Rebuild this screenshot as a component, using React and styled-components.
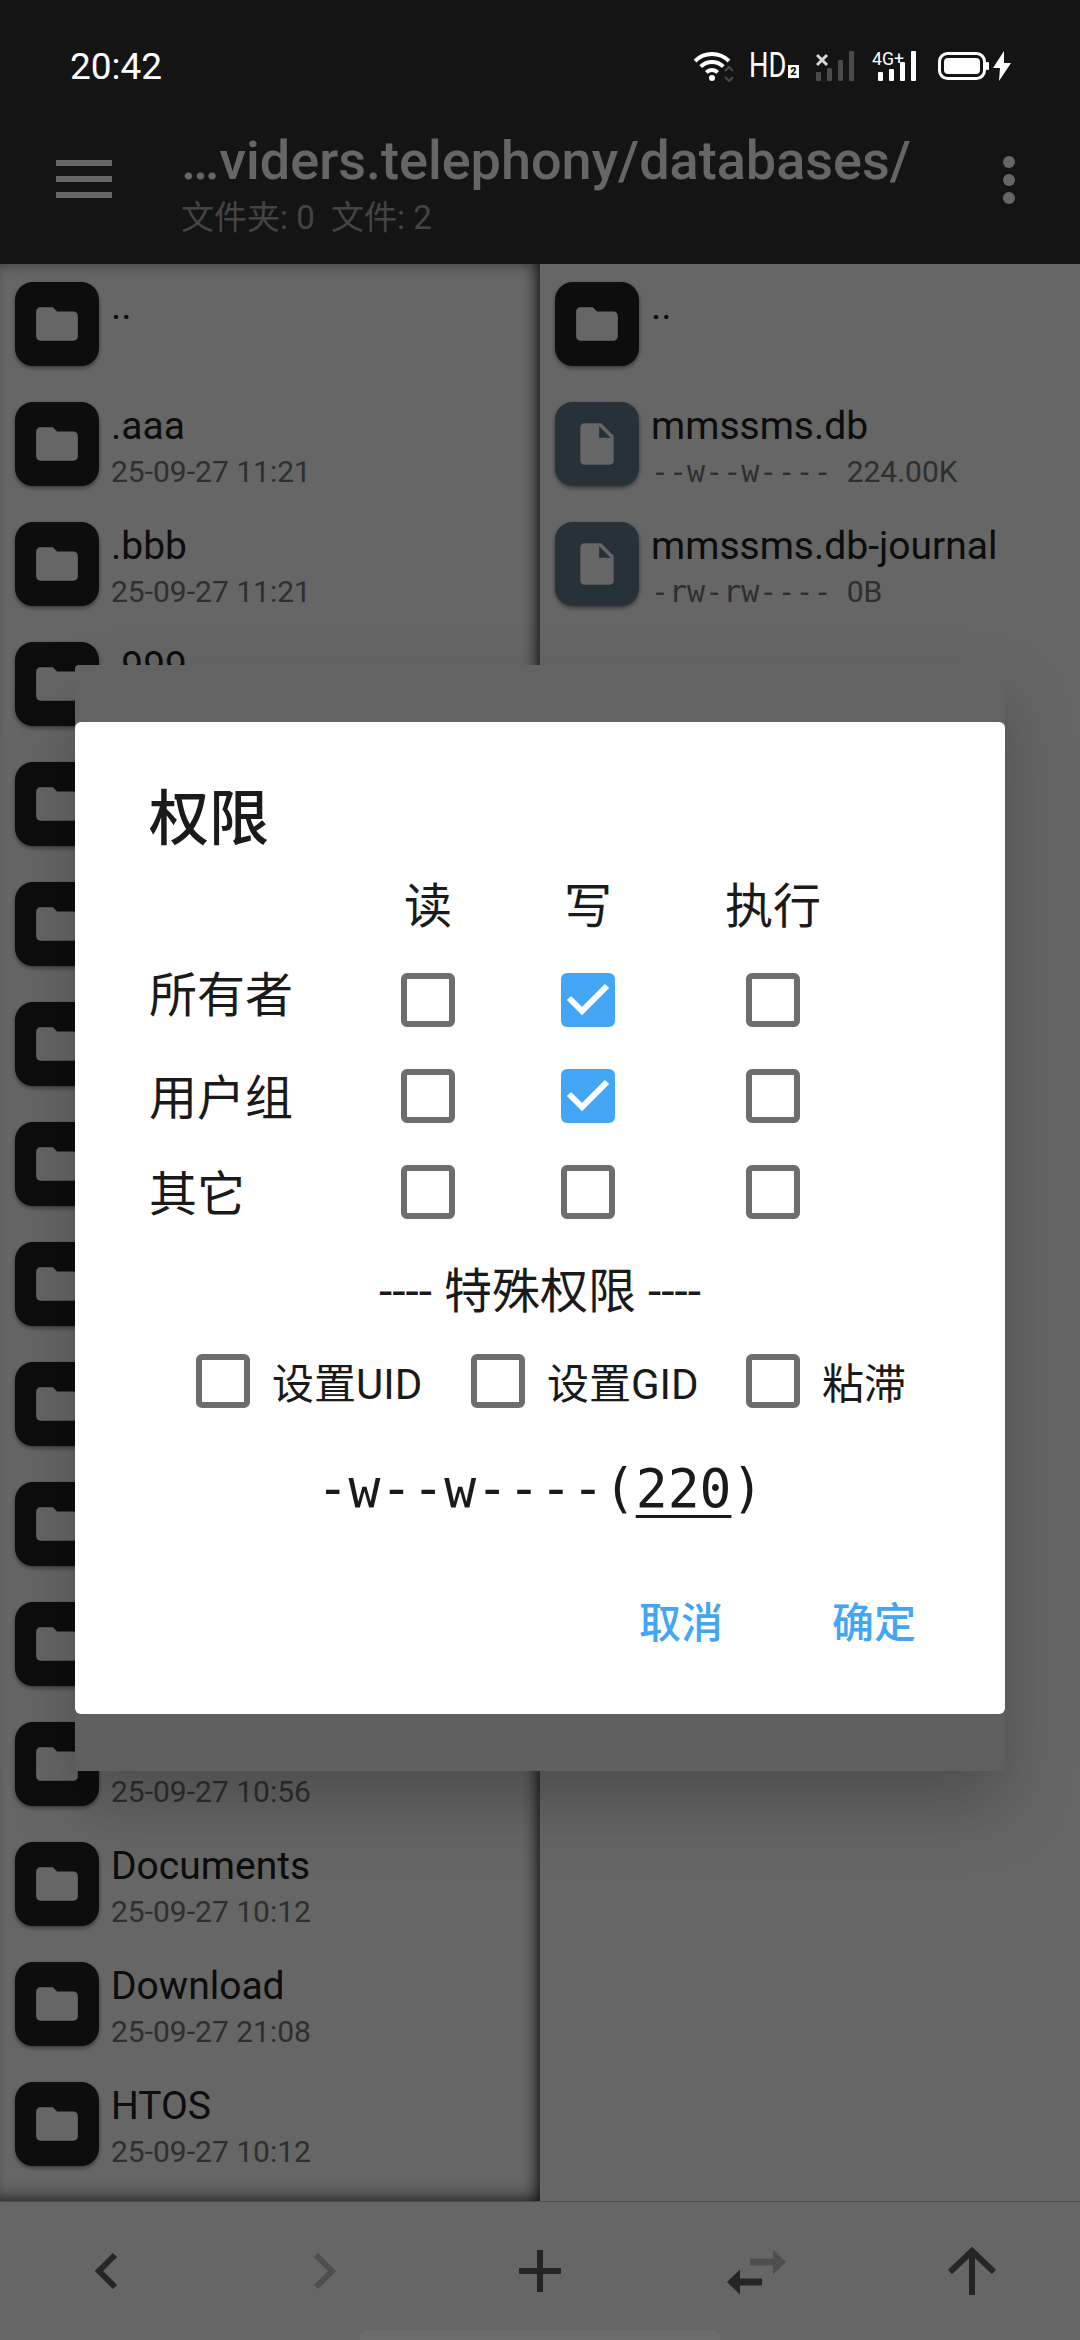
import React from 'react';
import styled, { createGlobalStyle } from 'styled-components';

const GlobalStyle = createGlobalStyle`
  html, body {
    margin: 0;
    padding: 0;
    background: #fff;
  }
  * {
    box-sizing: border-box;
  }
`;

const SANS = `Roboto, "Noto Sans CJK SC", sans-serif`;
const MONO = `"DejaVu Sans Mono", "Liberation Mono", monospace`;

const Screen = styled.div`
  position: relative;
  width: 1080px;
  height: 2340px;
  overflow: hidden;
  display: flex;
  flex-direction: column;
  background: #fff;
  font-family: ${SANS};
`;

const StatusBar = styled.div`
  position: absolute;
  top: 0;
  left: 0;
  right: 0;
  height: 132px;
  z-index: 3;
  padding: 0 68px 0 70px;
  display: flex;
  align-items: center;
  justify-content: space-between;
  color: #fff;
`;

const Clock = styled.span`
  font-size: 37px;
  line-height: 37px;
  margin-top: 1px;
`;

const StatusIcons = styled.div`
  display: flex;
  align-items: center;
  height: 36px;
`;

const HdLabel = styled.span`
  font-size: 35px;
  line-height: 36px;
  width: 39px;
  margin-left: 13px;
  transform: scaleX(0.78);
  transform-origin: left center;
`;

const SimBadge = styled.span`
  width: 11px;
  height: 13px;
  margin: 10px 0 0 0;
  background: #fff;
  color: #141414;
  font-size: 11px;
  font-weight: 900;
  line-height: 13px;
  text-align: center;
`;

const Header = styled.header`
  height: 264px;
  flex: none;
  background: #323232;
  padding: 132px 0 0 56px;
  display: flex;
`;

const MenuButton = styled.div`
  width: 56px;
  height: 38px;
  margin-top: 28px;
  display: flex;
  flex-direction: column;
  justify-content: space-between;
  flex: none;
`;

const MenuBar = styled.span`
  height: 6px;
  background: #fff;
`;

const TitleBlock = styled.div`
  width: 822px;
  margin-left: 69px;
  flex: none;
`;

const PathTitle = styled.div`
  color: #fff;
  font-size: 54px;
  font-weight: 500;
  line-height: 58px;
  white-space: nowrap;
`;

const PathInfo = styled.div`
  color: #aaa;
  font-size: 33px;
  line-height: 42px;
  margin-top: 7px;
  white-space: pre;
`;

const MoreIcon = styled.svg`
  width: 12px;
  height: 60px;
  margin-top: 18px;
  flex: none;
`;

const Panes = styled.main`
  flex: 1;
  min-height: 0;
  display: flex;
`;

const Pane = styled.section`
  width: 540px;
  flex: none;
  overflow: hidden;
  padding-top: 18px;
  ${(p) =>
    p.$raised &&
    `box-shadow: inset -14px 0 14px -10px rgba(0,0,0,.7), inset 0 14px 16px -12px rgba(0,0,0,.3), inset 0 -14px 16px -10px rgba(0,0,0,.6);`}
`;

const Row = styled.div`
  height: 120px;
  padding-left: 15px;
  display: flex;
  gap: 12px;
`;

const Tile = styled.div`
  width: 84px;
  height: 84px;
  flex: none;
  border-radius: 18px;
  background: ${(p) => (p.$file ? '#607d8b' : '#222')};
  box-shadow: 0 2px 4px rgba(0, 0, 0, 0.45);
  display: flex;
  align-items: center;
  justify-content: center;
`;

const TileIcon = styled.svg`
  width: 50px;
  height: 50px;
  fill: #fff;
`;

const RowText = styled.div`
  min-width: 0;
  display: flex;
  flex-direction: column;
`;

const RowName = styled.div`
  color: #212121;
  font-size: 39px;
  line-height: 44px;
  height: 44px;
  white-space: nowrap;
  margin-top: 2px;
`;

const RowMeta = styled.div`
  color: #757575;
  font-size: 30px;
  line-height: 40px;
  margin-top: 4px;
  white-space: pre;
`;

const Perm = styled.span`
  font-family: ${MONO};
  font-size: 30px;
  margin-right: 15px;
`;

const BottomBar = styled.nav`
  height: 139px;
  flex: none;
  display: grid;
  grid-template-columns: repeat(5, 216px);
  align-items: center;
  justify-items: center;
  border-top: 1.5px solid #c6c6c6;
`;

const BarIcon = styled.svg`
  width: 60px;
  height: 60px;
  overflow: visible;
  fill: none;
  stroke: ${(p) => (p.$off ? '#c4c4c4' : '#5e5e5e')};
  stroke-width: 6;
`;

const Scrim = styled.div`
  position: absolute;
  inset: 0;
  z-index: 2;
  background: rgba(0, 0, 0, 0.6);
  padding-top: 665px;
  display: flex;
  justify-content: center;
  align-items: flex-start;
`;

const DialogWindow = styled.div`
  width: 930px;
  padding: 57px 0;
  border-radius: 4px;
  background: linear-gradient(#636363, #5f5f5f);
  box-shadow: 0 34px 70px rgba(0, 0, 0, 0.24);
`;

const Dialog = styled.div`
  height: 992px;
  background: #fff;
  border-radius: 6px;
  color: #1a1a1a;
  padding-top: 63px;
`;

const DialogTitle = styled.h2`
  margin: 0 0 0 74px;
  font-size: 60px;
  font-weight: 500;
  line-height: 70px;
`;

const PermGrid = styled.div`
  margin: 3px 0 0 74px;
  display: grid;
  grid-template-columns: 199px 160px 160px 210px;
  grid-template-rows: 94px repeat(3, 96px);
  align-items: center;
  justify-items: center;
`;

const ColHead = styled.div`
  font-size: 48px;
  line-height: 60px;
  padding-top: 4px;
`;

const RowLabel = styled.div`
  justify-self: start;
  font-size: 48px;
  line-height: 60px;
  padding: ${(p) => (p.$first ? '0 0 8px' : '6px 0 0')};
`;

const Box = styled.span`
  display: block;
  flex: none;
  width: 54px;
  height: 54px;
  border-radius: 6px;
  border: ${(p) => (p.$checked ? 'none' : '6px solid #6d6d6d')};
  background: ${(p) => (p.$checked ? '#42a5f5' : '#fff')};
`;

const CheckMark = styled.svg`
  display: block;
  width: 54px;
  height: 54px;
  fill: none;
  stroke: #fff;
  stroke-width: 6;
`;

const SpecialHead = styled.div`
  height: 94px;
  display: flex;
  align-items: center;
  justify-content: center;
  font-size: 48px;
  white-space: pre;
`;

const FlagRow = styled.div`
  margin-top: 16px;
  padding-left: 121px;
  display: flex;
`;

const Flag = styled.div`
  flex: none;
  width: 275px;
  display: flex;
  align-items: center;
  gap: 22px;
  font-size: 42px;
  &:last-child {
    width: auto;
  }
`;

const ModeLine = styled.div`
  margin-top: 38px;
  height: 80px;
  text-align: center;
  font-family: ${MONO};
  font-size: 53px;
  line-height: 80px;
  white-space: pre;
`;

const ModeValue = styled.span`
  text-decoration: underline;
  text-decoration-thickness: 3px;
  text-underline-offset: 8px;
`;

const Actions = styled.div`
  margin-top: 65px;
  padding-right: 89px;
  display: flex;
  justify-content: flex-end;
  gap: 109px;
`;

const ActionButton = styled.button`
  border: none;
  background: none;
  padding: 0;
  color: #42a5f5;
  font-family: ${SANS};
  font-size: 42px;
  font-weight: 500;
  line-height: 60px;
`;

const HomeIndicator = styled.div`
  position: absolute;
  z-index: 3;
  left: 360px;
  bottom: 0;
  width: 360px;
  height: 9px;
  border-radius: 6px 6px 0 0;
  background: #6c6c6c;
`;

const FOLDER = 'M10 4H4c-1.1 0-2 .9-2 2v12c0 1.1.9 2 2 2h16c1.1 0 2-.9 2-2V8c0-1.1-.9-2-2-2h-8l-2-2z';
const FILE = 'M6 2c-1.1 0-2 .9-2 2v16c0 1.1.9 2 2 2h12c1.1 0 2-.9 2-2V8l-6-6H6zm7 7V3.5L18.5 9H13z';

const leftRows = [
  { name: '..' },
  { name: '.aaa', date: '25-09-27 11:21' },
  { name: '.bbb', date: '25-09-27 11:21' },
  { name: '.999', date: '25-09-27 11:21' },
  { name: '.config', date: '25-09-27 11:02' },
  { name: '.data', date: '25-09-27 11:02' },
  { name: '.log', date: '25-09-27 11:00' },
  { name: '.tmp', date: '25-09-27 10:58' },
  { name: 'Alarms', date: '25-09-27 10:12' },
  { name: 'Android', date: '25-09-27 10:12' },
  { name: 'Audiobooks', date: '25-09-27 10:12' },
  { name: 'DCIM', date: '25-09-27 10:12' },
  { name: 'Dcim2', date: '25-09-27 10:56' },
  { name: 'Documents', date: '25-09-27 10:12' },
  { name: 'Download', date: '25-09-27 21:08' },
  { name: 'HTOS', date: '25-09-27 10:12' },
];

const rightRows = [
  { name: '..' },
  { name: 'mmssms.db', perm: '--w--w----', size: '224.00K', file: true },
  { name: 'mmssms.db-journal', perm: '-rw-rw----', size: '0B', file: true },
];

const permRows = [
  { label: '所有者', checks: [false, true, false], first: true },
  { label: '用户组', checks: [false, true, false] },
  { label: '其它', checks: [false, false, false] },
];

const FileRow = ({ item }) => (
  <Row>
    <Tile $file={item.file}>
      <TileIcon viewBox="0 0 24 24">
        <path d={item.file ? FILE : FOLDER} />
      </TileIcon>
    </Tile>
    <RowText>
      <RowName>{item.name}</RowName>
      {item.date && <RowMeta>{item.date}</RowMeta>}
      {item.perm && (
        <RowMeta>
          <Perm>{item.perm}</Perm>
          {item.size}
        </RowMeta>
      )}
    </RowText>
  </Row>
);

const CheckBox = ({ checked }) => (
  <Box $checked={checked}>
    {checked && (
      <CheckMark viewBox="0 0 54 54">
        <path d="M8 25l13 13L46 13" />
      </CheckMark>
    )}
  </Box>
);

const App = () => {
  return (
    <Screen>
      <GlobalStyle />
      <Header>
        <MenuButton>
          <MenuBar />
          <MenuBar />
          <MenuBar />
        </MenuButton>
        <TitleBlock>
          <PathTitle>…viders.telephony/databases/</PathTitle>
          <PathInfo>文件夹: 0  文件: 2</PathInfo>
        </TitleBlock>
        <MoreIcon viewBox="0 0 12 60">
          <circle cx="6" cy="12" r="6" fill="#fff" />
          <circle cx="6" cy="30" r="6" fill="#fff" />
          <circle cx="6" cy="48" r="6" fill="#fff" />
        </MoreIcon>
      </Header>

      <Panes>
        <Pane $raised>
          {leftRows.map((item) => (
            <FileRow key={item.name} item={item} />
          ))}
        </Pane>
        <Pane>
          {rightRows.map((item) => (
            <FileRow key={item.name} item={item} />
          ))}
        </Pane>
      </Panes>

      <BottomBar>
        <BarIcon viewBox="-30 -30 60 60">
          <path d="M7-16L-9 0 7 16" />
        </BarIcon>
        <BarIcon viewBox="-30 -30 60 60" $off>
          <path d="M-8-16L8 0-8 16" />
        </BarIcon>
        <BarIcon viewBox="-30 -30 60 60">
          <path d="M-21 0H21M0-21V21" />
        </BarIcon>
        <BarIcon viewBox="-30 -30 60 60">
          <path d="M-29 11L-16-1.500V23.500Z" fill="#5e5e5e" stroke="none" />
          <path d="M-17 11H6" strokeWidth="7" />
          <path d="M30-9L17-21.500V3.500Z" fill="#c4c4c4" stroke="none" />
          <path d="M-6-9H18" stroke="#c4c4c4" strokeWidth="7" />
        </BarIcon>
        <BarIcon viewBox="-30 -30 60 60">
          <path d="M-22 1L0-20 22 1M0-20V24" />
        </BarIcon>
      </BottomBar>

      <Scrim>
        <DialogWindow>
          <Dialog>
            <DialogTitle>权限</DialogTitle>
            <PermGrid>
              <span />
              <ColHead>读</ColHead>
              <ColHead>写</ColHead>
              <ColHead>执行</ColHead>
              {permRows.map((row) => (
                <React.Fragment key={row.label}>
                  <RowLabel $first={row.first}>{row.label}</RowLabel>
                  {row.checks.map((checked, i) => (
                    <CheckBox key={i} checked={checked} />
                  ))}
                </React.Fragment>
              ))}
            </PermGrid>
            <SpecialHead>---- 特殊权限 ----</SpecialHead>
            <FlagRow>
              <Flag>
                <CheckBox />
                设置UID
              </Flag>
              <Flag>
                <CheckBox />
                设置GID
              </Flag>
              <Flag>
                <CheckBox />
                粘滞
              </Flag>
            </FlagRow>
            <ModeLine>
              -w--w----(<ModeValue>220</ModeValue>)
            </ModeLine>
            <Actions>
              <ActionButton>取消</ActionButton>
              <ActionButton>确定</ActionButton>
            </Actions>
          </Dialog>
        </DialogWindow>
      </Scrim>

      <StatusBar>
        <Clock>20:42</Clock>
        <StatusIcons>
          <svg width="42" height="32" viewBox="0 0 42 32" fill="none">
            <g stroke="#fff" strokeWidth="4">
              <path d="M1 11A24 24 0 0 1 35 11" />
              <path d="M6.700 16.700A16 16 0 0 1 29.300 16.700" />
              <path d="M12.300 22.300A8 8 0 0 1 23.700 22.300" />
            </g>
            <circle cx="18" cy="28" r="3" fill="#fff" />
            <path d="M31 21l4-4 4 4M31 27l4 4 4-4" stroke="#4a4a4a" strokeWidth="2" />
          </svg>
          <HdLabel>HD</HdLabel>
          <SimBadge>2</SimBadge>
          <svg width="40" height="32" viewBox="0 0 40 32" style={{ marginLeft: 17 }}>
            <path d="M1 5l10 10M11 5L1 15" stroke="#d8d8d8" strokeWidth="3" />
            <g fill="#4a4a4a">
              <rect x="0" y="22" width="5" height="9" rx="1" />
              <rect x="11" y="18" width="5" height="13" rx="1" />
              <rect x="22" y="10" width="5" height="21" rx="1" />
              <rect x="33" y="1" width="5" height="30" rx="1" />
            </g>
          </svg>
          <svg width="46" height="32" viewBox="0 0 46 32" style={{ marginLeft: 16 }} fill="#fff">
            <text x="0" y="15" fontFamily="Roboto, sans-serif" fontSize="18" textLength="32" lengthAdjust="spacingAndGlyphs">4G+</text>
            <rect x="6" y="22" width="5" height="9" rx="1" />
            <rect x="17" y="19" width="5" height="12" rx="1" />
            <rect x="28" y="12" width="5" height="19" rx="1" />
            <rect x="39" y="1" width="5" height="30" rx="1" />
          </svg>
          <svg width="54" height="32" viewBox="0 0 54 32" style={{ marginLeft: 20 }}>
            <rect x="1.500" y="3.500" width="45" height="25" rx="8" fill="none" stroke="#fff" strokeWidth="3" />
            <rect x="6" y="8" width="36" height="16" rx="4" fill="#fff" />
            <rect x="48" y="12" width="3" height="8" rx="1" fill="#fff" />
          </svg>
          <svg width="20" height="32" viewBox="0 0 20 32">
            <path d="M12 1L1 18h7L7 31l12-18h-7z" fill="#fff" />
          </svg>
        </StatusIcons>
      </StatusBar>
      <HomeIndicator />
    </Screen>
  );
};

export default App;
